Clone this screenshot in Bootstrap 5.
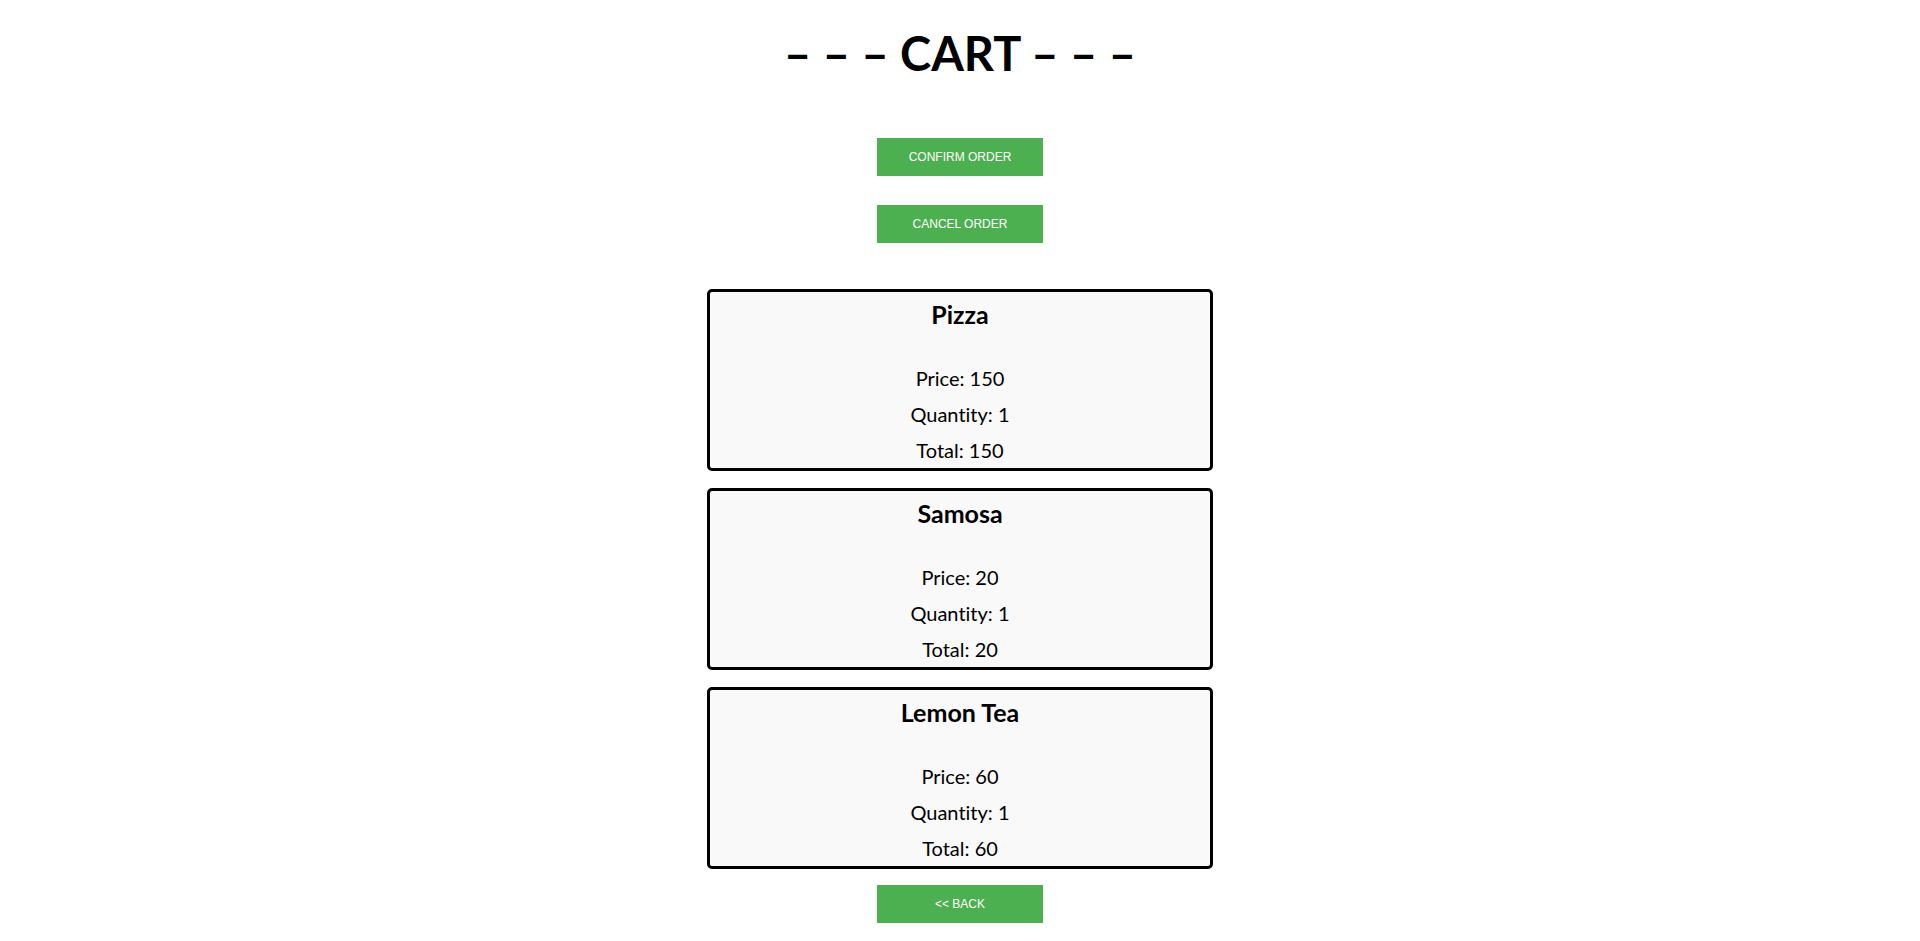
<!DOCTYPE html>
<html lang="en">
<head>
<meta charset="utf-8">
<meta name="viewport" content="width=device-width, initial-scale=1">
<title>Cart</title>
<link href="https://cdn.jsdelivr.net/npm/bootstrap@5.3.0/dist/css/bootstrap.min.css" rel="stylesheet">
<style>
  body { font-family: Lato, "Liberation Sans", sans-serif; font-variant-ligatures: none; color: #000; background: #fff; }
  .cart-title { font-size: 47px; line-height: 58px; font-weight: 700; margin-bottom: 56px; }
  .btn-cart {
    --bs-btn-color: #fff; --bs-btn-bg: #4caf50; --bs-btn-border-color: #4caf50;
    --bs-btn-hover-color: #fff; --bs-btn-hover-bg: #43a047; --bs-btn-hover-border-color: #43a047;
    --bs-btn-border-radius: 0; --bs-btn-font-size: 12px; --bs-btn-line-height: 20px;
    --bs-btn-padding-y: 8px; --bs-btn-padding-x: 16px;
    font-family: "Liberation Sans", Arial, sans-serif;
    width: 166px;
  }
  .order-actions { gap: 29px; margin-bottom: 46px; }
  .order-list { gap: 17px; max-width: 506px; }
  .order-item { background: #f9f9f9; border: 3px solid #000; border-radius: 5px; }
  .order-name { font-size: 25px; line-height: 44px; font-weight: 700; margin-bottom: 24px; }
  .order-line { font-size: 20px; line-height: 36px; }
</style>
</head>
<body>
<main class="container-fluid d-flex flex-column align-items-center text-center py-4">
  <h1 class="cart-title">– – – CART – – –</h1>
  <div class="order-actions d-flex flex-column">
    <button type="button" class="btn btn-cart">CONFIRM ORDER</button>
    <button type="button" class="btn btn-cart">CANCEL ORDER</button>
  </div>
  <div class="order-list d-flex flex-column w-100 mb-3">
    <section class="order-item">
      <h2 class="order-name">Pizza</h2>
      <p class="order-line mb-0">Price: 150</p>
      <p class="order-line mb-0">Quantity: 1</p>
      <p class="order-line mb-0">Total: 150</p>
    </section>
    <section class="order-item">
      <h2 class="order-name">Samosa</h2>
      <p class="order-line mb-0">Price: 20</p>
      <p class="order-line mb-0">Quantity: 1</p>
      <p class="order-line mb-0">Total: 20</p>
    </section>
    <section class="order-item">
      <h2 class="order-name">Lemon Tea</h2>
      <p class="order-line mb-0">Price: 60</p>
      <p class="order-line mb-0">Quantity: 1</p>
      <p class="order-line mb-0">Total: 60</p>
    </section>
  </div>
  <button type="button" class="btn btn-cart">&lt;&lt; BACK</button>
</main>
<script src="https://cdn.jsdelivr.net/npm/bootstrap@5.3.0/dist/js/bootstrap.bundle.min.js"></script>
</body>
</html>
